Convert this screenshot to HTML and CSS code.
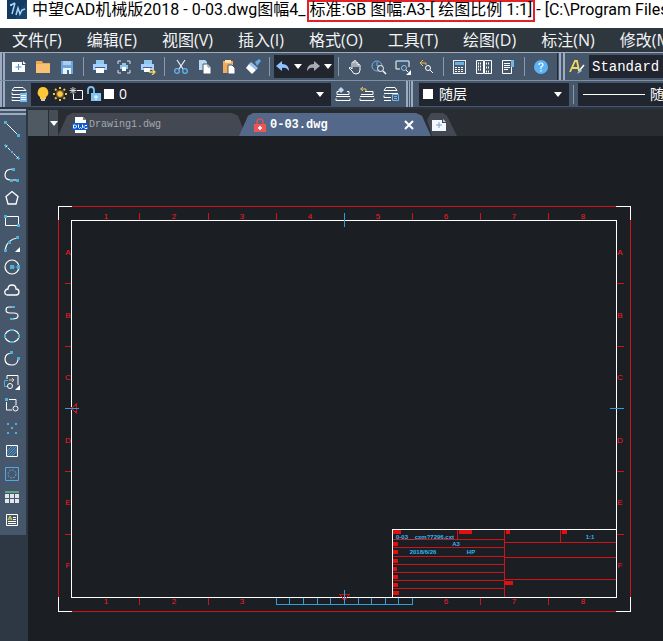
FILE: index.html
```html
<!DOCTYPE html>
<html lang="zh-CN">
<head>
<meta charset="utf-8">
<title>中望CAD机械版2018</title>
<link rel="stylesheet" href="styles.css">
</head>
<body>
<div class="app">
  <header class="titlebar">
    <svg class="logo" width="20" height="19" viewBox="0 0 20 19"><rect width="20" height="19" fill="#17446f"/><path d="M0 0h20L8 19H0z" fill="#123a61"/><path d="M4 5l4-2M8 3L5 14M9 15l2-7 2 6 2-4 3-1" fill="none" stroke="#a4d3f5" stroke-width="1.500"/><path d="M3 4h2v2H3z" fill="#a4d3f5"/></svg>
    <span>中望CAD机械版2018 - 0-03.dwg图幅4_</span>
    <span class="marked">标准:GB 图幅:A3-[ 绘图比例 1:1]</span>
    <span class="path">- [C:\Program Files</span>
  </header>

  <nav class="menu">
    <button>文件(F)</button><button>编辑(E)</button><button>视图(V)</button><button>插入(I)</button><button>格式(O)</button><button>工具(T)</button><button>绘图(D)</button><button>标注(N)</button><button>修改(M)</button>
  </nav>

  <div class="toolbar">
    <i class="grip"></i>
    <button class="tool" aria-label="新建"><svg viewBox="0 0 16 16"><path d="M1 3h10v3h3v7H1z" fill="#fff"/><path d="M12 2l3 3h-3z" fill="#fff"/><path d="M7.500 5v6M4.500 8h6" stroke="#4e8fc4"/></svg></button>
    <button class="tool" aria-label="打开"><svg viewBox="0 0 16 16"><path d="M1 2h6l1 2h7v10H1z" fill="#f0a850"/><path d="M1 5h14v9H1z" fill="#fcc074"/></svg></button>
    <button class="tool" aria-label="保存"><svg viewBox="0 0 16 16"><path d="M2 2h12v13H2z" fill="#6ea5dc"/><path d="M4 2h8v4H4z" fill="#a7cdf0"/><path d="M4 9h8v6H4z" fill="#e8f3fc"/><path d="M8 11h2v4H8z" fill="#456f99"/></svg></button>
    <i class="sep"></i>
    <button class="tool" aria-label="打印"><svg viewBox="0 0 16 16"><path d="M4 1h8v4H4z" fill="#8fc7ee"/><path d="M1 5h14v6H1z" fill="#a7cfff"/><path d="M3 8h10v1H3z" fill="#3d6390"/><path d="M4 9h8v5H4z" fill="#fff"/></svg></button>
    <button class="tool" aria-label="打印预览"><svg viewBox="0 0 16 16"><path d="M2 5V2h3M11 2h3v3M14 11v3h-3M5 14H2v-3" fill="none" stroke="#d7e6f2"/><path d="M6 4h4v2h2v4h-2v2H6v-2H4V6h2z" fill="#8ec3ec"/><path d="M6 8h4v4H6z" fill="#fff"/></svg></button>
    <button class="tool" aria-label="发布"><svg viewBox="0 0 16 16"><path d="M4 1h8v4H4z" fill="#8fc7ee"/><path d="M1 5h13v6H1z" fill="#a7cfff"/><path d="M3 8h9v1H3z" fill="#3d6390"/><path d="M4 9h6v4H4z" fill="#fff"/><path d="M9 13h5m-2-3l3 3-3 3" fill="none" stroke="#f3d568" stroke-width="1.400"/></svg></button>
    <i class="sep"></i>
    <button class="tool" aria-label="剪切"><svg viewBox="0 0 16 16"><path d="M4 1l6 9M12 1L6 10" stroke="#eef4fa" stroke-width="1.200"/><g fill="none" stroke="#63b6ec" stroke-width="1.300"><circle cx="4" cy="12" r="2.300"/><circle cx="12" cy="12" r="2.300"/></g></svg></button>
    <button class="tool" aria-label="复制"><svg viewBox="0 0 16 16"><path d="M2 1h6l2 2v8H2z" fill="#b9d9f5"/><path d="M6 5h5l3 3v7H6z" fill="#fff" stroke="#46566b"/><path d="M11 5v3h3" fill="none" stroke="#6c8199"/></svg></button>
    <button class="tool" aria-label="粘贴"><svg viewBox="0 0 16 16"><path d="M2 2h10v12H2z" fill="#f3aa5d"/><path d="M4 1h6v3H4z" fill="#ffe0b4"/><path d="M7 6h4l3 3v6H7z" fill="#fff" stroke="#46566b"/></svg></button>
    <button class="tool" aria-label="特性匹配"><svg viewBox="0 0 16 16"><path d="M10 3l4-3 2 2-4 5z" fill="#68a9e3"/><path d="M6 3l7 6-2 2-7-6z" fill="#8ec5f3"/><path d="M4 5l7 6-4 4-6-6z" fill="#fff"/></svg></button>
    <i class="sep"></i>
    <div class="history">
      <button class="tool" aria-label="撤销"><svg viewBox="0 0 16 16"><path d="M7 2v3c5 0 7 3 7 7-2-3-4-4-7-3v3L1 7z" fill="#8fc3ff"/></svg></button>
      <button class="drop" aria-label="撤销列表"></button>
      <button class="tool" aria-label="重做"><svg viewBox="0 0 16 16"><path d="M9 2v3c-5 0-7 3-7 7 2-3 4-4 7-3v3l6-5z" fill="#a9adb3"/></svg></button>
      <button class="drop" aria-label="重做列表"></button>
    </div>
    <i class="sep"></i>
    <button class="tool" aria-label="平移"><svg viewBox="0 0 16 16"><path d="M5 10V4q0-1 1-1t1 1V2q1-1 2 0v2q1-1 2 0v2q1-1 2 0v5q0 4-4 4-3 0-4-3L2 9q1-2 3 1M7 4v4M9 4v4M11 5v3" fill="none" stroke="#fff"/></svg></button>
    <button class="tool" aria-label="实时缩放"><svg viewBox="0 0 16 16"><circle cx="6" cy="7" r="5" fill="none" stroke="#69b7e8"/><path d="M6 3v4h3" fill="none" stroke="#69b7e8"/><circle cx="9.500" cy="9.500" r="3" fill="#46566b" stroke="#fff"/><path d="M12 12l3 3" stroke="#fff" stroke-width="1.400"/></svg></button>
    <button class="tool" aria-label="窗口缩放"><svg viewBox="0 0 16 16"><path d="M5 10H1V2h13v6" fill="none" stroke="#fff"/><path d="M1 2h13" stroke="#69b7e8"/><circle cx="9" cy="9" r="2.500" fill="#46566b" stroke="#8ac7ef"/><path d="M11 11l2 2" stroke="#fff"/><path d="M16 11v5h-5z" fill="#fff"/></svg></button>
    <button class="tool" aria-label="缩放上一个"><svg viewBox="0 0 16 16"><path d="M7 6V4H2m2-3L1 4l3 3" fill="none" stroke="#f0bc58"/><circle cx="9" cy="9" r="2.500" fill="none" stroke="#fff"/><path d="M11 11l3 3" stroke="#fff"/></svg></button>
    <i class="sep"></i>
    <button class="tool" aria-label="特性"><svg viewBox="0 0 16 16"><rect x="1.500" y="1.500" width="12" height="13" fill="none" stroke="#e8eff6"/><path d="M3 3h9v3H3z" fill="#66b2e6"/><path d="M3 8.500h9M3 10.500h9M3 12.500h9" stroke="#fff" stroke-dasharray="2 1"/></svg></button>
    <button class="tool" aria-label="设计中心"><svg viewBox="0 0 16 16"><path d="M.5 1.500h7v13h-7zM8.500 1.500h7v13h-7z" fill="none" stroke="#fff"/><path d="M2 4.500h4M2 7.500h4M2 10.500h4M10 4.500h4M10 8.500h4M10 12.500h4" stroke="#fff" stroke-width="2" stroke-dasharray="1 1"/></svg></button>
    <button class="tool" aria-label="工具选项板"><svg viewBox="0 0 16 16"><path d="M2.500 1.500h9v13h-9z" fill="none" stroke="#fff"/><path d="M11 1h3v7h-3z" fill="#70b8e8"/><path d="M4 4.500h6M4 6.500h6M4 8.500h6M4 10.500h4" stroke="#fff"/></svg></button>
    <i class="sep"></i>
    <button class="tool" aria-label="帮助"><svg viewBox="0 0 16 16"><circle cx="8" cy="8" r="7" fill="#5bb3f4"/><path d="M6 6q0-2 2-2t2 2q0 1-2 2v2M8 11v1.500" fill="none" stroke="#fff" stroke-width="1.200"/></svg></button>
    <i class="grip mid"></i>
    <button class="tool" aria-label="文字样式"><svg viewBox="0 0 16 16"><path d="M1 13L6 2h2l2 10M3 9h6" fill="none" stroke="#f4d75d" stroke-width="1.800"/><path d="M15 6l-5 6" stroke="#fff" stroke-width="1.500"/><path d="M11 10l2 2-5 3z" fill="#a9c8e4"/></svg></button>
    <label class="combo rest"><select class="style" aria-label="文字样式名"><option>Standard</option></select></label>
  </div>

  <div class="toolbar">
    <i class="grip"></i>
    <button class="tool layers" aria-label="图层特性"><svg viewBox="0 0 16 16"><path d="M3 1.500h9l3 3H1zM1 6.500v2h14v-2M1 10.500v1h9M1 13.500v1h9" fill="none" stroke="#fff"/><path d="M9 7h7v9H9z" fill="#76bcf3"/><path d="M10 9.500h5M10 11.500h5M10 13.500h5" stroke="#fff"/></svg></button>
    <label class="combo layer">
      <svg width="16" height="16" viewBox="0 0 16 16"><path d="M8 1a5.500 5.500 0 0 1 3 10v2H5v-2a5.500 5.500 0 0 1 3-10z" fill="#fdc637"/><path d="M6 13h4v2H6z" fill="#c9ccd0"/></svg>
      <svg width="16" height="16" viewBox="0 0 16 16"><g stroke="#f7c53b" stroke-width="2"><path d="M8 1v14M1 8h14M3 3l10 10M13 3L3 13" stroke-dasharray="2 1"/></g><circle cx="8" cy="8" r="3.500" fill="#fdc637" stroke="#4c4430"/></svg>
      <svg width="16" height="16" viewBox="0 0 16 16"><path d="M8 4.500h5.500v9h-9V8" fill="none" stroke="#fff"/><path d="M4 1v7M.5 4.500h7M1.500 2l5 5M6.500 2l-5 5" stroke="#d7d7d7"/></svg>
      <svg width="16" height="16" viewBox="0 0 16 16"><path d="M2 8V4q0-3 3-3t3 3v4" fill="none" stroke="#7fc2ed" stroke-width="1.800"/><path d="M5 7h10v8H5z" fill="#80c6f3"/><path d="M10 9v5M8 11h4" stroke="#fff"/></svg>
      <svg width="12" height="16" viewBox="0 0 12 16"><path d="M1 3h10v10H1z" fill="#fff"/></svg>
      <select aria-label="图层"><option>0</option></select><i class="drop"></i>
    </label>
    <button class="tool" aria-label="置为当前图层"><svg viewBox="0 0 16 16"><path d="M4 5.500H2v3h12v-3h-2M1 10.500h14M1 12.500v2h14v-2" fill="none" stroke="#fff"/><path d="M6 1l3 3-3 3-3-3z" fill="#b9dcf8"/></svg></button>
    <button class="tool" aria-label="上一图层"><svg viewBox="0 0 16 16"><path d="M6 5.500h8v3H2M1 10.500h14M1 12.500v2h14v-2" fill="none" stroke="#fff"/><path d="M7 5V3H2m2-2L1.500 3 4 5" fill="none" stroke="#f3c65c"/></svg></button>
    <button class="tool" aria-label="图层状态"><svg viewBox="0 0 16 16"><path d="M3 1.500h9l2 3H1zM1 7.500h14M1 9.500v2h7M1 14.500h7" fill="none" stroke="#fff"/><path d="M9.500 8.500h6v6h-6zM11 10.500h3M11 12.500h3" fill="none" stroke="#73b9ed"/></svg></button>
    <i class="grip inner"></i>
    <label class="combo color"><i class="swatch"></i><select aria-label="颜色"><option>随层</option></select><i class="drop"></i></label>
    <i class="sep"></i>
    <label class="combo rest"><i class="linetype"></i><select aria-label="线型"><option>随层</option></select></label>
  </div>

  <div class="work">
    <aside class="side">
      <i class="hgrip"></i>
      <button aria-label="直线"><svg viewBox="0 0 16 16"><path d="M2 2l12 12" stroke="#fff"/><path d="M0 0h3v3H0zM13 13h3v3h-3z" fill="#4cb2dc"/></svg></button>
      <button aria-label="构造线"><svg viewBox="0 0 16 16"><path d="M1 1l14 14" stroke="#fff" stroke-dasharray="3 1"/><path d="M0 1.500h4M1.500 0v4M12 14.500h4M14.500 12v4" stroke="#4cb2dc"/><path d="M7 7h2v2H7z" fill="#4cb2dc"/></svg></button>
      <button aria-label="多段线"><svg viewBox="0 0 16 16"><path d="M9 2Q1 2 1 8q0 5 6 5h6" fill="none" stroke="#fff" stroke-width="1.200"/><path d="M8 1h3v3H8zM6 12h3v3H6zM12 12h3v3h-3z" fill="#4cb2dc"/></svg></button>
      <button aria-label="正多边形"><svg viewBox="0 0 16 16"><path d="M8 1.500l6 5L12 14H4L2 6.500z" fill="none" stroke="#fff" stroke-width="1.300"/></svg></button>
      <button aria-label="矩形"><svg viewBox="0 0 16 16"><path d="M1.500 3.500h13v9h-13z" fill="none" stroke="#fff"/><path d="M0 2h3v3H0zM13 11h3v3h-3z" fill="#4cb2dc"/></svg></button>
      <button aria-label="圆弧"><svg viewBox="0 0 16 16"><path d="M1 14Q3 3 14 2" fill="none" stroke="#fff" stroke-width="1.200"/><path d="M0 13h3v3H0zM4 5h3v3H4zM12 0h3v3h-3z" fill="#4cb2dc"/><path d="M16 11v5h-5z" fill="#fff"/></svg></button>
      <button aria-label="圆"><svg viewBox="0 0 16 16"><circle cx="8" cy="8" r="7" fill="none" stroke="#fff" stroke-width="1.200"/><path d="M8 8h6" stroke="#4cb2dc" stroke-dasharray="3 1"/><path d="M6 6h4v4H6zM13 6h3v4h-3z" fill="#4cb2dc"/></svg></button>
      <button aria-label="修订云线"><svg viewBox="0 0 16 16"><path d="M3 13q-3-1-2-4 1-2 3-2 0-4 4-4t4 4q3 0 3 3t-3 3z" fill="none" stroke="#fff" stroke-width="1.300"/></svg></button>
      <button aria-label="样条曲线"><svg viewBox="0 0 16 16"><path d="M9 2H5Q2 2 2 5t4 3h4q4 0 4 3t-6 3" fill="none" stroke="#fff" stroke-width="1.200"/><path d="M8 1h3v2H8zM6 13h3v2H6z" fill="#4cb2dc"/></svg></button>
      <button aria-label="椭圆"><svg viewBox="0 0 16 16"><ellipse cx="8" cy="8" rx="7" ry="6" fill="none" stroke="#fff" stroke-width="1.200"/><path d="M6 1h4v2H6zM0 6h2v4H0zM14 6h2v4h-2zM6 13h4v2H6z" fill="#4cb2dc"/></svg></button>
      <button aria-label="椭圆弧"><svg viewBox="0 0 16 16"><path d="M9 2Q1 2 1 8q0 6 7 6 5 0 6-5" fill="none" stroke="#fff" stroke-width="1.200"/><path d="M6 0h3v3H6zM13 6h3v3h-3z" fill="#4cb2dc"/></svg></button>
      <button aria-label="插入块"><svg viewBox="0 0 16 16"><path d="M3 5V1.500h11V11M8 12.500H1" fill="none" stroke="#fff"/><path d="M4 6.500H.5v6H3" fill="none" stroke="#4cb2dc"/><path d="M5 6h5M8 4l2 2-2 2" fill="none" stroke="#efc4a0"/><circle cx="6" cy="12" r="2.500" fill="#46566b" stroke="#fff"/><path d="M16 11v5h-5z" fill="#fff"/></svg></button>
      <button aria-label="创建块"><svg viewBox="0 0 16 16"><path d="M5 2.500h7V8M2.500 5v8H8" fill="none" stroke="#fff"/><circle cx="11.500" cy="11.500" r="2.500" fill="none" stroke="#fff"/><path d="M1 1h3v3H1z" fill="#4cb2dc"/></svg></button>
      <button aria-label="点"><svg viewBox="0 0 16 16"><path d="M3 3h2v2H3zM11 3h2v2h-2zM7 7h2v2H7zM3 12h2v2H3zM11 12h2v2h-2z" fill="#4cb2dc"/></svg></button>
      <button aria-label="图案填充"><svg viewBox="0 0 16 16"><path d="M3 8l5-5M3 13L13 3M8 13l5-5M3 10.500L10.500 3M5.500 13L13 5.500" stroke="#4c9fdc"/><path d="M2.500 2.500h11v11h-11z" fill="none" stroke="#fff"/></svg></button>
      <button aria-label="面域"><svg viewBox="0 0 16 16"><path d="M1.500 1.500h13v13h-13z" fill="none" stroke="#55a9e2"/><circle cx="8" cy="8" r="4" fill="none" stroke="#55a9e2" stroke-dasharray="2 1"/></svg></button>
      <button aria-label="表格"><svg viewBox="0 0 16 16"><path d="M1 2h14v2H1z" fill="#62a482"/><path d="M1 5h4v4H1zM6 5h4v4H6zM11 5h4v4h-4zM1 10h4v4H1zM6 10h4v4H6zM11 10h4v4h-4z" fill="#e2e5eb"/></svg></button>
      <button aria-label="多行文字"><svg viewBox="0 0 16 16"><path d="M2.500 2.500h11v11h-11z" fill="none" stroke="#fff"/><path d="M4 8l2-4 2 4M5 7h2" fill="none" stroke="#f1d955"/><path d="M9 5.500h3M9 7.500h3M4 9.500h8M4 11.500h8" stroke="#fff"/></svg></button>
    </aside>

    <main class="doc">
      <div class="tabs">
        <i class="blank"></i>
        <button class="list" aria-label="文档列表"><i class="drop"></i></button>
        <button class="tab first"><svg width="16" height="16" viewBox="0 0 16 16"><path d="M3 0h8l3 3v13H3z" fill="#fff"/><path d="M11 0v3h3" fill="#777"/><path d="M0 6h16v7H0z" fill="#0b58c8"/><path d="M1.500 8v3h2l1-1V9l-1-1zM6.500 7.500v3l1 1 1-1 1 1 1-1v-3M15 8.500h-2l-1 1v1l1 1h2v-1" fill="none" stroke="#fff"/></svg>Drawing1.dwg</button>
        <button class="tab current"><svg width="12" height="14" viewBox="0 0 12 14"><path d="M3 6V4q0-3 3-3t3 3v2" fill="none" stroke="#e04f4f" stroke-width="1.500"/><path d="M0 6h12v8H0z" fill="#ee5656"/><path d="M6 8v4M4 10h4" stroke="#fff" stroke-width="1.500"/></svg>0-03.dwg<svg class="close" width="10" height="10" viewBox="0 0 10 10"><path d="M1 1l8 8M9 1L1 9" stroke="#fff" stroke-width="2"/></svg></button>
        <button class="tab add" aria-label="新建文档"><svg width="16" height="12" viewBox="0 0 16 12"><path d="M1 1h10v3h4v8H1z" fill="#f4f8ff"/><path d="M12 0l3 3h-3z" fill="#b9c8e0"/><path d="M8 3v6M5 6h6" stroke="#7ba0d0"/></svg></button>
      </div>
      <svg class="canvas" viewBox="28 136 635 505" preserveAspectRatio="xMinYMin meet" role="img" aria-label="A3图框">
        <g class="red">
          <path d="M72 206.500H616M630.500 220V597M616 611.500H72M58.500 597V220"/>
          <path d="M139.500 213v8M208.500 213v8M276.500 213v8M412.500 213v8M480.500 213v8M548.500 213v8M139.500 597v8M208.500 597v8M480.500 598v7M548.500 598v7"/>
          <path d="M65 283.500h7M65 346.500h7M65 471.500h7M65 534.500h7M616 283.500h8M616 346.500h8M616 471.500h8M616 534.500h8"/>
        </g>
        <path class="white" d="M58.500 220V206.500H72M616 206.500h14.500V220M630.500 597v14.500H616M72 611.500H58.500V597M71.500 220.500h545v377h-545z"/>
        <g class="red">
          <path d="M393 539.500h111M393 547.500h111M393 556.500h111M393 564.500h111M393 572.500h111M393 580.500h111M393 588.500h111M504.500 530v67M457.500 530v9M505 542.500h111M505 557.500h111M505 579.500h111M560.500 530v12"/>
          <path d="M71 408.500l5-4v8zM340 594.500h9l-4.500 6z"/>
          <path class="caption" d="M393 532h8M459 532h13M506 532h4M562 532h5M393 544h5M393 552h5M393 561h5M393 569h4M393 577h5M393 585h5M393 593h6M505 583h8"/>
        </g>
        <path class="white" d="M392.500 597V529.500H616"/>
        <path class="cyan" d="M344.500 213v14M344.500 590v14M65 408.500h14M610 408.500h14M276.500 598v6.500h136V598M289.500 598v6M303.500 598v6M317.500 598v6M330.500 598v6M358.500 598v6M371.500 598v6M385.500 598v6M398.500 598v6"/>
        <g class="zone">
          <text x="106" y="219">1</text><text x="174" y="219">2</text><text x="242" y="219">3</text><text x="310" y="219">4</text><text x="378" y="219">5</text><text x="446" y="219">6</text><text x="514" y="219">7</text><text x="583" y="219">8</text>
          <text x="106" y="604">1</text><text x="174" y="604">2</text><text x="242" y="604">3</text><text x="446" y="604">6</text><text x="514" y="604">7</text><text x="583" y="604">8</text>
          <text x="68" y="255">A</text><text x="68" y="318">B</text><text x="68" y="380">C</text><text x="68" y="443">D</text><text x="68" y="505">E</text><text x="68" y="568">F</text>
          <text x="620" y="255">A</text><text x="620" y="318">B</text><text x="620" y="380">C</text><text x="620" y="443">D</text><text x="620" y="505">E</text><text x="620" y="568">F</text>
        </g>
        <g class="note">
          <text x="425" y="539">0-03__cxm?7296.cxt</text><text x="456" y="546">A3</text><text x="423" y="554">2018/6/26</text><text x="471" y="554">HP</text><text x="590" y="539">1:1</text>
        </g>
      </svg>
    </main>
  </div>
</div>
</body>
</html>
```
FILE: styles.css
```css
* { box-sizing: border-box; }
body { margin: 0; background: #1b1e22; font-family: "Open Sans", "Noto Sans CJK SC", sans-serif; }
button { border: 0; padding: 0; margin: 0; background: none; color: inherit; font: inherit; }
svg { display: block; flex: none; }
i { display: block; flex: none; }
.app { display: flex; flex-direction: column; min-height: 100vh; overflow: hidden; }

.titlebar { display: flex; align-items: flex-start; height: 28px; padding-left: 7px; background: #fff; color: #000; font-family: Roboto, "Noto Sans CJK SC", sans-serif; font-size: 16px; line-height: 20px; white-space: nowrap; overflow: hidden; }
.titlebar span { flex: none; }
.logo { margin-right: 5px; }
.marked { height: 22px; margin: 0 1px; padding: 0 1px; border: 2px solid #e32227; line-height: 16px; }

.menu { display: flex; gap: 25px; height: 24px; padding-left: 12px; background: #2e363e; color: #f2f4f6; font-size: 16px; line-height: 24px; white-space: nowrap; overflow: hidden; }
.menu button { flex: none; }

.toolbar { display: flex; align-items: center; height: 28px; border-top: 1px solid #9fabbb; background: #46566b; overflow: hidden; }
.toolbar + .toolbar { height: 27px; border-top-color: #7f8fa5; }
.grip { width: 5px; height: 27px; margin-right: 2px; border-right: 2px solid #9cabc0; border-left: 2px solid #9cabc0; }
.grip.mid { width: 8px; margin: 0 0 0 4px; border-left: 1px solid #222a35; background: linear-gradient(90deg, transparent 1px, #9cabc0 1px, #9cabc0 3px, transparent 3px); }
.grip.inner { width: 7px; margin: 0 6px 0 3px; background: linear-gradient(90deg, transparent 1px, #9cabc0 1px, #9cabc0 2px, transparent 2px); }
.tool { display: flex; flex: none; align-items: center; justify-content: center; width: 24px; height: 24px; }
.tool svg { width: 16px; height: 16px; }
.sep { width: 1px; height: 19px; margin: 0 4px; background: #8a98aa; }
.history { display: flex; flex: none; align-items: center; width: 60px; height: 23px; background: #20252e; }
.history .tool { width: 18px; }
.drop { display: flex; flex: none; align-items: center; justify-content: center; width: 12px; height: 12px; }
.drop::before { content: ""; border: 4px solid transparent; border-top: 5px solid #fff; border-bottom: 0; }

.combo { display: flex; flex: none; align-items: center; height: 23px; background: #20252f; color: #fff; overflow: hidden; }
.combo select { flex: 1; min-width: 0; padding: 0; border: 0; appearance: none; background: none; color: #fff; font: 14px/20px "Open Sans", "Noto Sans CJK SC", sans-serif; }
.combo .drop { margin-right: 5px; }
.combo.rest { flex: 1; min-width: 0; padding-left: 3px; }
.combo .style { font-family: "Liberation Mono", monospace; }
.layer { width: 300px; padding-left: 4px; gap: 1px; }
.layer select { margin-left: 3px; }
.color { width: 150px; padding-left: 4px; gap: 6px; }
.swatch { width: 10px; height: 10px; background: #fff; }
.linetype { width: 62px; height: 1px; margin: 0 5px 0 2px; background: #fff; }

.work { display: flex; flex: 1; border-top: 2px solid #2b3442; background: #2e3744; }
.side { flex: none; align-self: flex-start; width: 26px; padding-bottom: 4px; background: #46566b; }
.side button { display: flex; align-items: center; justify-content: center; width: 24px; height: 23px; }
.side svg { width: 16px; height: 16px; }
.hgrip { height: 6px; margin-bottom: 2px; border-top: 2px solid #9cabc0; border-bottom: 2px solid #9cabc0; }
.doc { display: flex; flex: 1; flex-direction: column; min-width: 0; margin-left: 2px; background: #1b1e22; }
.tabs { display: flex; align-items: flex-end; height: 27px; background: #292c30; color: #a4a8ae; font: 10px/20px "Liberation Mono", monospace; }
.blank { width: 20px; height: 26px; background: #4f5961; }
.list { display: flex; flex: none; align-items: center; justify-content: center; width: 9px; height: 26px; margin-left: 1px; background: #454e56; }
.tab { display: flex; flex: none; align-items: center; height: 23px; background: #434853; }
.first { width: 188px; padding-left: 14px; gap: 1px; clip-path: polygon(0 100%, 9px 12%, 14px 0, 174px 0, 180px 12%, 100% 100%); }
.current { width: 192px; margin-left: -7px; padding: 0 17px 0 15px; gap: 4px; background: #54698a; color: #fff; font-size: 12px; font-weight: bold; clip-path: polygon(0 100%, 9px 12%, 14px 0, 177px 0, 183px 12%, 100% 100%); }
.close { margin-left: auto; }
.add { width: 30px; padding-left: 4px; margin-left: -4px; clip-path: polygon(0 30%, 4px 0, 16px 0, 20px 12%, 100% 100%, 5px 100%); }

.canvas { width: 100%; height: auto; }
.canvas path { fill: none; shape-rendering: crispEdges; }
.red { stroke: #cf1419; }
.white { stroke: #fff; }
.cyan { stroke: #2f9fd8; }
.canvas .caption { stroke: #e01010; stroke-width: 4px; }
.zone { fill: #ff1a24; font: 8px "Liberation Sans", sans-serif; text-anchor: middle; }
.note { fill: #2fb8f8; font: bold 6px "Liberation Sans", sans-serif; text-anchor: middle; }
```
